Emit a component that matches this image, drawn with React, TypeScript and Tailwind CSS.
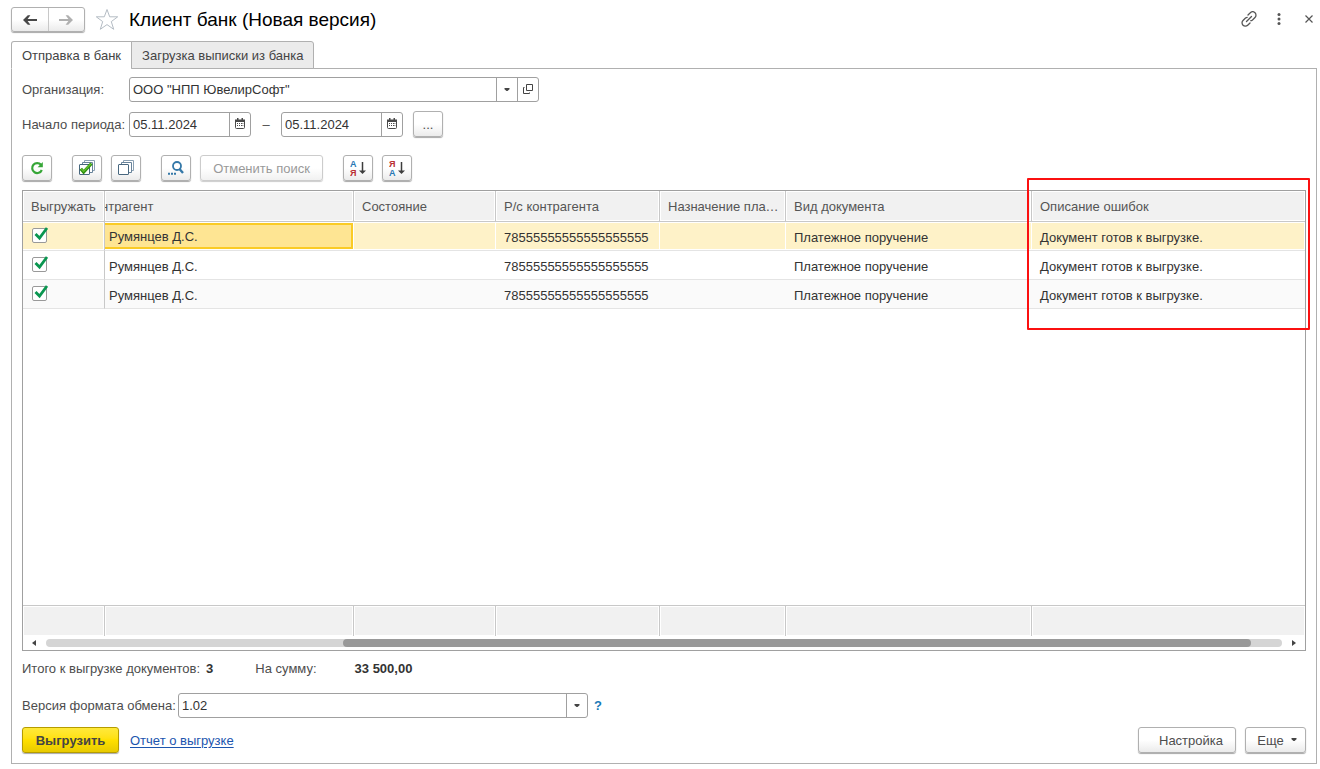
import React, { useState } from 'react';
import clsx from 'clsx';

const columns = [
  { title: 'Выгружать', width: 'w-[82px]' },
  { title: 'нтрагент', width: 'w-[249px]' },
  { title: 'Состояние', width: 'w-[142px]' },
  { title: 'Р/с контрагента', width: 'w-[164px]' },
  { title: 'Назначение платежа', width: 'w-[126px]' },
  { title: 'Вид документа', width: 'w-[246px]' },
  { title: 'Описание ошибок', width: '' },
];

const documents = [1, 2, 3].map((id) => ({
  id,
  partner: 'Румянцев Д.С.',
  state: '',
  account: '78555555555555555555',
  purpose: '',
  kind: 'Платежное поручение',
  error: 'Документ готов к выгрузке.',
}));

const buttonBase =
  'flex items-center justify-center rounded-[3px] border border-[#b0b0b0] bg-linear-to-b from-white from-50% to-[#ebebeb] shadow-[0_1px_1px_#a8a8a8]';

const ToolButton: React.FC<{ label: string; className?: string; children: React.ReactNode }> = ({ label, className, children }) => (
  <button type="button" aria-label={label} title={label} className={clsx(buttonBase, 'h-[26px] w-[30px] shrink-0', className)}>
    {children}
  </button>
);

const Caret = () => (
  <svg width="7" height="4" viewBox="0 0 7 4" fill="#444" aria-hidden="true">
    <path d="M.5 0h5v1.2L3.500 3h-1L.5 1.200z" />
  </svg>
);

const CalendarIcon = () => (
  <svg width="10" height="11" viewBox="0 0 10 11" aria-hidden="true">
    <path d="M.5 2.5h9v7a1 1 0 0 1-1 1h-7a1 1 0 0 1-1-1z" fill="#fff" stroke="#4a4a4a" />
    <path d="M0 1.5h10V4H0zM2 0h1.5v2H2zM6.5 0H8v2H6.5z" fill="#4a4a4a" />
    <path d="M2 5h1v1H2zM4 5h1v1H4zM6 5h1v1H6zM2 7h1v1H2zM4 7h1v1H4zM6 7h1v1H6zM7.500 5h.8v1h-.8zM7.500 7h.8v1h-.8z" fill="#4a4a4a" />
  </svg>
);

const DateField: React.FC<{ id: string; label?: string }> = ({ id, label }) => (
  <div className="flex h-[25px] w-[122px] rounded-[3px] border border-[#a0a0a0]">
    <input id={id} aria-label={label} defaultValue="05.11.2024" className="w-0 flex-1 px-[3px] text-[#333] outline-none" />
    <button type="button" aria-label="Выбрать дату" className="flex w-[21px] items-center justify-center border-l border-[#a0a0a0] pb-0.5">
      <CalendarIcon />
    </button>
  </div>
);

const SheetsIcon: React.FC<{ checked?: boolean }> = ({ checked }) => (
  <svg width="16" height="16" viewBox="0 0 16 16" aria-hidden="true">
    <path d="M5.500 3.500v-3h10v10h-3" fill="#fff" stroke="#8aa0b3" />
    <path d="M3.500 5.500v-3h10v10h-3" fill="#fff" stroke="#68839a" />
    <rect x=".5" y="4.500" width="10" height="10" rx=".5" fill="#fff" stroke="#48677f" />
    {checked && <path d="M1.800 8.800 4.600 12 12.500 3.500" fill="none" stroke="#2f8f10" strokeWidth="3.200" />}
    {checked && <path d="M2.300 9 4.600 11.400 12 3.700" fill="none" stroke="#62c42d" strokeWidth="1.300" />}
  </svg>
);

const SortIcon: React.FC<{ reverse?: boolean }> = ({ reverse }) => (
  <svg width="16" height="18" viewBox="0 0 16 18" aria-hidden="true">
    <g fontSize="9" fontWeight="700">
      <text x="0" y="8" fill={reverse ? '#b92d32' : '#2878b4'}>{reverse ? 'Я' : 'А'}</text>
      <text x="0" y="17" fill={reverse ? '#2878b4' : '#b92d32'}>{reverse ? 'А' : 'Я'}</text>
    </g>
    <path d="M12.500 3v10" stroke="#3d3d3d" strokeWidth="1.500" />
    <path d="M9 11.500h7L12.500 15z" fill="#3d3d3d" />
  </svg>
);

const ColumnWidths = () => (
  <colgroup>
    {columns.map((column) => (
      <col key={column.title} className={column.width} />
    ))}
  </colgroup>
);

const TitleBar = () => (
  <header className="flex h-[25px] items-center">
    <div className="flex h-[25px] w-[74px] rounded-[3px] border border-[#b0b0b0] bg-linear-to-b from-white from-50% to-[#ebebeb] shadow-[0_1px_1px_#a8a8a8]">
      <button type="button" aria-label="Назад" className="flex flex-1 items-center justify-center border-r border-[#c8c8c8] text-[#484848]">
        <svg width="14" height="10" viewBox="0 0 14 10" fill="currentColor" aria-hidden="true">
          <path d="M0 5 4.800.200h2.600L4.600 4H14v2H4.600l2.800 3.800H4.800z" />
        </svg>
      </button>
      <button type="button" aria-label="Вперед" className="flex flex-1 items-center justify-center text-[#b0b0b0]">
        <svg width="14" height="10" viewBox="0 0 14 10" fill="currentColor" aria-hidden="true">
          <path d="M14 5 9.200.200H6.600L9.400 4H0v2h9.400L6.600 9.800h2.600z" />
        </svg>
      </button>
    </div>
    <button type="button" aria-label="В избранное" className="ml-[10px]">
      <svg width="24" height="23" viewBox="0 0 24 23" fill="none" stroke="#b4bcc4" aria-hidden="true">
        <path d="m12 1.500 2.700 7.300h8l-6.400 4.800 2.400 7.700-6.700-4.700-6.700 4.700 2.400-7.700L1.300 8.800h8z" />
      </svg>
    </button>
    <h1 className="ml-[10px] text-[19px] leading-6 text-black">Клиент банк (Новая версия)</h1>
    <div className="-mr-0.5 ml-auto flex items-center pb-0.5 text-[#555]">
      <button type="button" aria-label="Получить ссылку" className="flex size-5 items-center justify-center">
        <svg width="16" height="16" viewBox="0 0 16 16" fill="none" stroke="currentColor" strokeWidth="1.300" strokeLinecap="round" aria-hidden="true">
          <path d="m7 4 2.300-2.200a3.200 3.200 0 0 1 4.700 4.700L11.500 9c-.5.400-1 .7-1.700.7M9 12l-2.300 2.200A3.200 3.200 0 0 1 2 9.500L4.500 7c.5-.4 1-.7 1.700-.7M5.500 10.500l5-5" />
        </svg>
      </button>
      <button type="button" aria-label="Меню" className="ml-[10px] flex size-5 items-center justify-center">
        <svg width="4" height="12" viewBox="0 0 4 12" fill="currentColor" aria-hidden="true">
          <circle cx="2" cy="1.500" r="1.500" />
          <circle cx="2" cy="6" r="1.500" />
          <circle cx="2" cy="10.500" r="1.500" />
        </svg>
      </button>
      <button type="button" aria-label="Закрыть" className="ml-[10px] flex size-5 items-center justify-center">
        <svg width="8" height="8" viewBox="0 0 8 8" stroke="currentColor" strokeWidth="1.200" aria-hidden="true">
          <path d="m.5.500 7 7m0-7-7 7" />
        </svg>
      </button>
    </div>
  </header>
);

const Toolbar = () => (
  <div className="mt-[18px] flex items-center">
    <ToolButton label="Обновить">
      <svg width="14" height="14" viewBox="0 0 14 14" aria-hidden="true">
        <path d="M11 3.800A5 5 0 1 0 11.800 9" fill="none" stroke="#36a637" strokeWidth="2.200" />
        <path d="M12.800 1v5.200H7.600z" fill="#36a637" />
      </svg>
    </ToolButton>
    <ToolButton label="Установить флажки" className="ml-5"><SheetsIcon checked /></ToolButton>
    <ToolButton label="Снять флажки" className="ml-[9px]"><SheetsIcon /></ToolButton>
    <ToolButton label="Найти" className="ml-5">
      <svg width="16" height="14" viewBox="0 0 16 14" fill="none" stroke="#3478a8" aria-hidden="true">
        <circle cx="9" cy="5" r="4" strokeWidth="1.800" />
        <path d="m11.500 8 3.500 4" strokeWidth="2.400" />
        <path d="M0 12.800h2m1 0h2m1 0h2" strokeWidth="2" />
      </svg>
    </ToolButton>
    <button type="button" disabled className="ml-[9px] h-[26px] w-[123px] rounded-[3px] border border-[#ccc] bg-linear-to-b from-white from-50% to-[#f1f1f1] text-[#999] shadow-[0_1px_1px_#ccc]">
      Отменить поиск
    </button>
    <ToolButton label="Сортировать по возрастанию" className="ml-5"><SortIcon /></ToolButton>
    <ToolButton label="Сортировать по убыванию" className="ml-[9px]"><SortIcon reverse /></ToolButton>
  </div>
);

const RowCheckbox: React.FC<{ label: string }> = ({ label }) => (
  <span className="relative block size-[15px]">
    <input type="checkbox" defaultChecked aria-label={label} className="peer block size-[15px] appearance-none rounded-[2px] border border-[#999] bg-white" />
    <svg width="16" height="16" viewBox="0 0 16 16" className="pointer-events-none absolute -top-px left-px hidden peer-checked:block" aria-hidden="true">
      <path d="M2.500 7 6.500 11 14 1" fill="none" stroke="#0a9650" strokeWidth="2.800" />
    </svg>
  </span>
);

const DocumentTable = () => (
  <div className="relative mt-[9px] flex flex-1 flex-col border border-[#a0a0a0]">
    <table className="w-full table-fixed border-separate border-spacing-0 text-left">
      <ColumnWidths />
      <thead>
        <tr className="h-[31px] text-[#555]">
          {columns.map((column, i) => (
            <th
              key={column.title}
              className={clsx(
                'overflow-hidden border-b border-[#c8c8c8] bg-[#f1f1f1] p-0 font-normal whitespace-nowrap shadow-[inset_0_0_0_1px_#fff]',
                i < columns.length - 1 && 'border-r',
              )}
            >
              <span className={clsx('block', i === 1 ? '-ml-1' : 'truncate pl-2', i > 1 && 'pr-1')}>{column.title}</span>
            </th>
          ))}
        </tr>
      </thead>
      <tbody className="text-[#333]">
        {documents.map((doc, row) => {
          const cell = clsx(
            'border-b border-[#e4e4e4] px-2 pt-0.5 pb-0 whitespace-nowrap',
            row === 0 && 'bg-[#fef2c8] shadow-[inset_0_1px_0_#fff,inset_0_-1px_0_#fff,inset_-1px_0_0_#fff]',
            row === 2 && 'bg-[#fafafa]',
          );
          return (
            <tr key={doc.id} className="h-[29px]">
              <td className={clsx(cell, 'border-r border-r-[#c8c8c8]')}>
                <span className="block pb-[3px] pl-px"><RowCheckbox label={`Выгружать ${doc.id}`} /></span>
              </td>
              {row === 0 ? (
                <td className="border-b border-[#e4e4e4] p-0 pt-px pr-px pb-px">
                  <div className="flex h-[26px] items-center border-2 border-l-0 border-[#facb26] bg-[#fee593] pt-px pl-1">{doc.partner}</div>
                </td>
              ) : (
                <td className={clsx(cell, 'pl-1')}>{doc.partner}</td>
              )}
              <td className={cell}>{doc.state}</td>
              <td className={cell}>{doc.account}</td>
              <td className={cell}>{doc.purpose}</td>
              <td className={cell}>{doc.kind}</td>
              <td className={cell}>{doc.error}</td>
            </tr>
          );
        })}
      </tbody>
    </table>
    <div className="flex-1" />
    <table className="w-full table-fixed border-separate border-spacing-0" aria-label="Итоги">
      <ColumnWidths />
      <tfoot>
        <tr className="h-[31px]">
          {columns.map((column, i) => (
            <td key={column.title} className={clsx('border-t border-[#c8c8c8] bg-[#f1f1f1] p-0 shadow-[inset_0_0_0_1px_#fff]', i < columns.length - 1 && 'border-r')} />
          ))}
        </tr>
      </tfoot>
    </table>
    <div className="flex h-[14px] items-center px-[9px]">
      <svg width="4" height="6" viewBox="0 0 4 6" fill="#444" aria-hidden="true"><path d="M4 0v6L0 3z" /></svg>
      <div className="mr-[10px] ml-[10px] flex h-2 flex-1 rounded-full bg-[#d5d5d5]">
        <div className="ml-[24%] w-[73.500%] rounded-full bg-[#999]" />
      </div>
      <svg width="4" height="6" viewBox="0 0 4 6" fill="#444" aria-hidden="true"><path d="M0 0v6l4-3z" /></svg>
    </div>
    <div className="pointer-events-none absolute -top-[13px] -right-[5px] left-[1004px] h-[152px] rounded-[1px] border-2 border-[#fb1010]" />
  </div>
);

const App: React.FC = () => {
  const [tab, setTab] = useState(0);

  return (
    <div className="flex min-h-screen flex-col bg-white pt-[7px] pr-[3px] pb-[5px] pl-[11px] font-['Liberation_Sans',Arial,sans-serif] text-[13px] leading-[17px] text-[#4d4d4d]">
      <TitleBar />
      <div role="tablist" className="z-10 mt-[9px] -mb-px flex">
        {['Отправка в банк', 'Загрузка выписки из банка'].map((title, i) => (
          <button
            key={title}
            type="button"
            role="tab"
            aria-selected={tab === i}
            onClick={() => setTab(i)}
            className={clsx(
              'h-7 border border-[#b0b0b0] px-[10px] text-[#444]',
              i === 0 ? 'rounded-tl-[3px]' : '-ml-px rounded-tr-[3px]',
              tab === i ? 'border-b-white bg-white' : 'bg-[#ebebeb]',
            )}
          >
            {title}
          </button>
        ))}
      </div>

      <main className="flex flex-1 flex-col border border-[#b0b0b0] px-[10px] pt-2 pb-[10px]">
        <div className="flex items-center">
          <label htmlFor="organization" className="w-[107px] shrink-0">Организация:</label>
          <div className="flex h-[25px] w-[410px] rounded-[3px] border border-[#a0a0a0]">
            <input id="organization" defaultValue={'ООО "НПП ЮвелирСофт"'} className="w-0 flex-1 px-[3px] text-[#333] outline-none" />
            <button type="button" aria-label="Выбрать" className="flex w-[21px] items-center justify-center border-l border-[#a0a0a0]"><Caret /></button>
            <button type="button" aria-label="Открыть" className="flex w-[21px] items-center justify-center border-l border-[#a0a0a0] pb-0.5">
              <svg width="10" height="10" viewBox="0 0 10 10" fill="none" stroke="#444" aria-hidden="true">
                <path d="M3.500.5h6v6h-6zM1.500 3.500h-1v6h6v-1" />
              </svg>
            </button>
          </div>
        </div>

        <div className="mt-[9px] flex items-center">
          <label htmlFor="period-start" className="w-[107px] shrink-0 whitespace-nowrap">Начало периода:</label>
          <DateField id="period-start" />
          <span className="w-[30px] text-center">–</span>
          <DateField id="period-end" label="Конец периода" />
          <ToolButton label="Выбрать период" className="ml-[10px]">...</ToolButton>
        </div>

        <Toolbar />
        <DocumentTable />

        <div className="mt-[9px] flex">
          <span>Итого к выгрузке документов:</span>
          <b className="ml-[6px] text-[#333]">3</b>
          <span className="ml-[42px]">На сумму:</span>
          <b className="ml-[38px] text-[#333]">33 500,00</b>
        </div>

        <div className="mt-4 flex items-center">
          <label htmlFor="format" className="w-[156px] shrink-0 whitespace-nowrap">Версия формата обмена:</label>
          <div className="relative flex h-[25px] w-[410px] rounded-[3px] border border-[#a0a0a0]">
            <select id="format" className="w-full appearance-none px-[3px] text-[#333] outline-none">
              <option>1.02</option>
            </select>
            <span className="pointer-events-none absolute inset-y-0 right-0 flex w-[21px] items-center justify-center border-l border-[#a0a0a0]"><Caret /></span>
          </div>
          <button type="button" aria-label="Справка" className="ml-[6px] font-bold text-[#1a7ab8]">?</button>
        </div>

        <div className="mt-[9px] flex items-center">
          <button type="button" className="h-[26px] w-[97px] rounded-[3px] border border-[#b59c00] bg-linear-to-b from-[#ffe939] via-[#ffe000] to-[#e8ca00] font-bold text-[#444] shadow-[0_1px_1px_#a8a8a8]">
            Выгрузить
          </button>
          <a href="#report" className="ml-[11px] text-[#1c55ae] underline underline-offset-2">Отчет о выгрузке</a>
          <button type="button" className={clsx(buttonBase, 'ml-auto h-[26px] w-[98px] pl-2')}>Настройка</button>
          <button type="button" className={clsx(buttonBase, 'ml-[9px] h-[26px] w-[61px] gap-[7px] pl-1')}>
            Еще <Caret />
          </button>
        </div>
      </main>
    </div>
  );
};

export default App;
